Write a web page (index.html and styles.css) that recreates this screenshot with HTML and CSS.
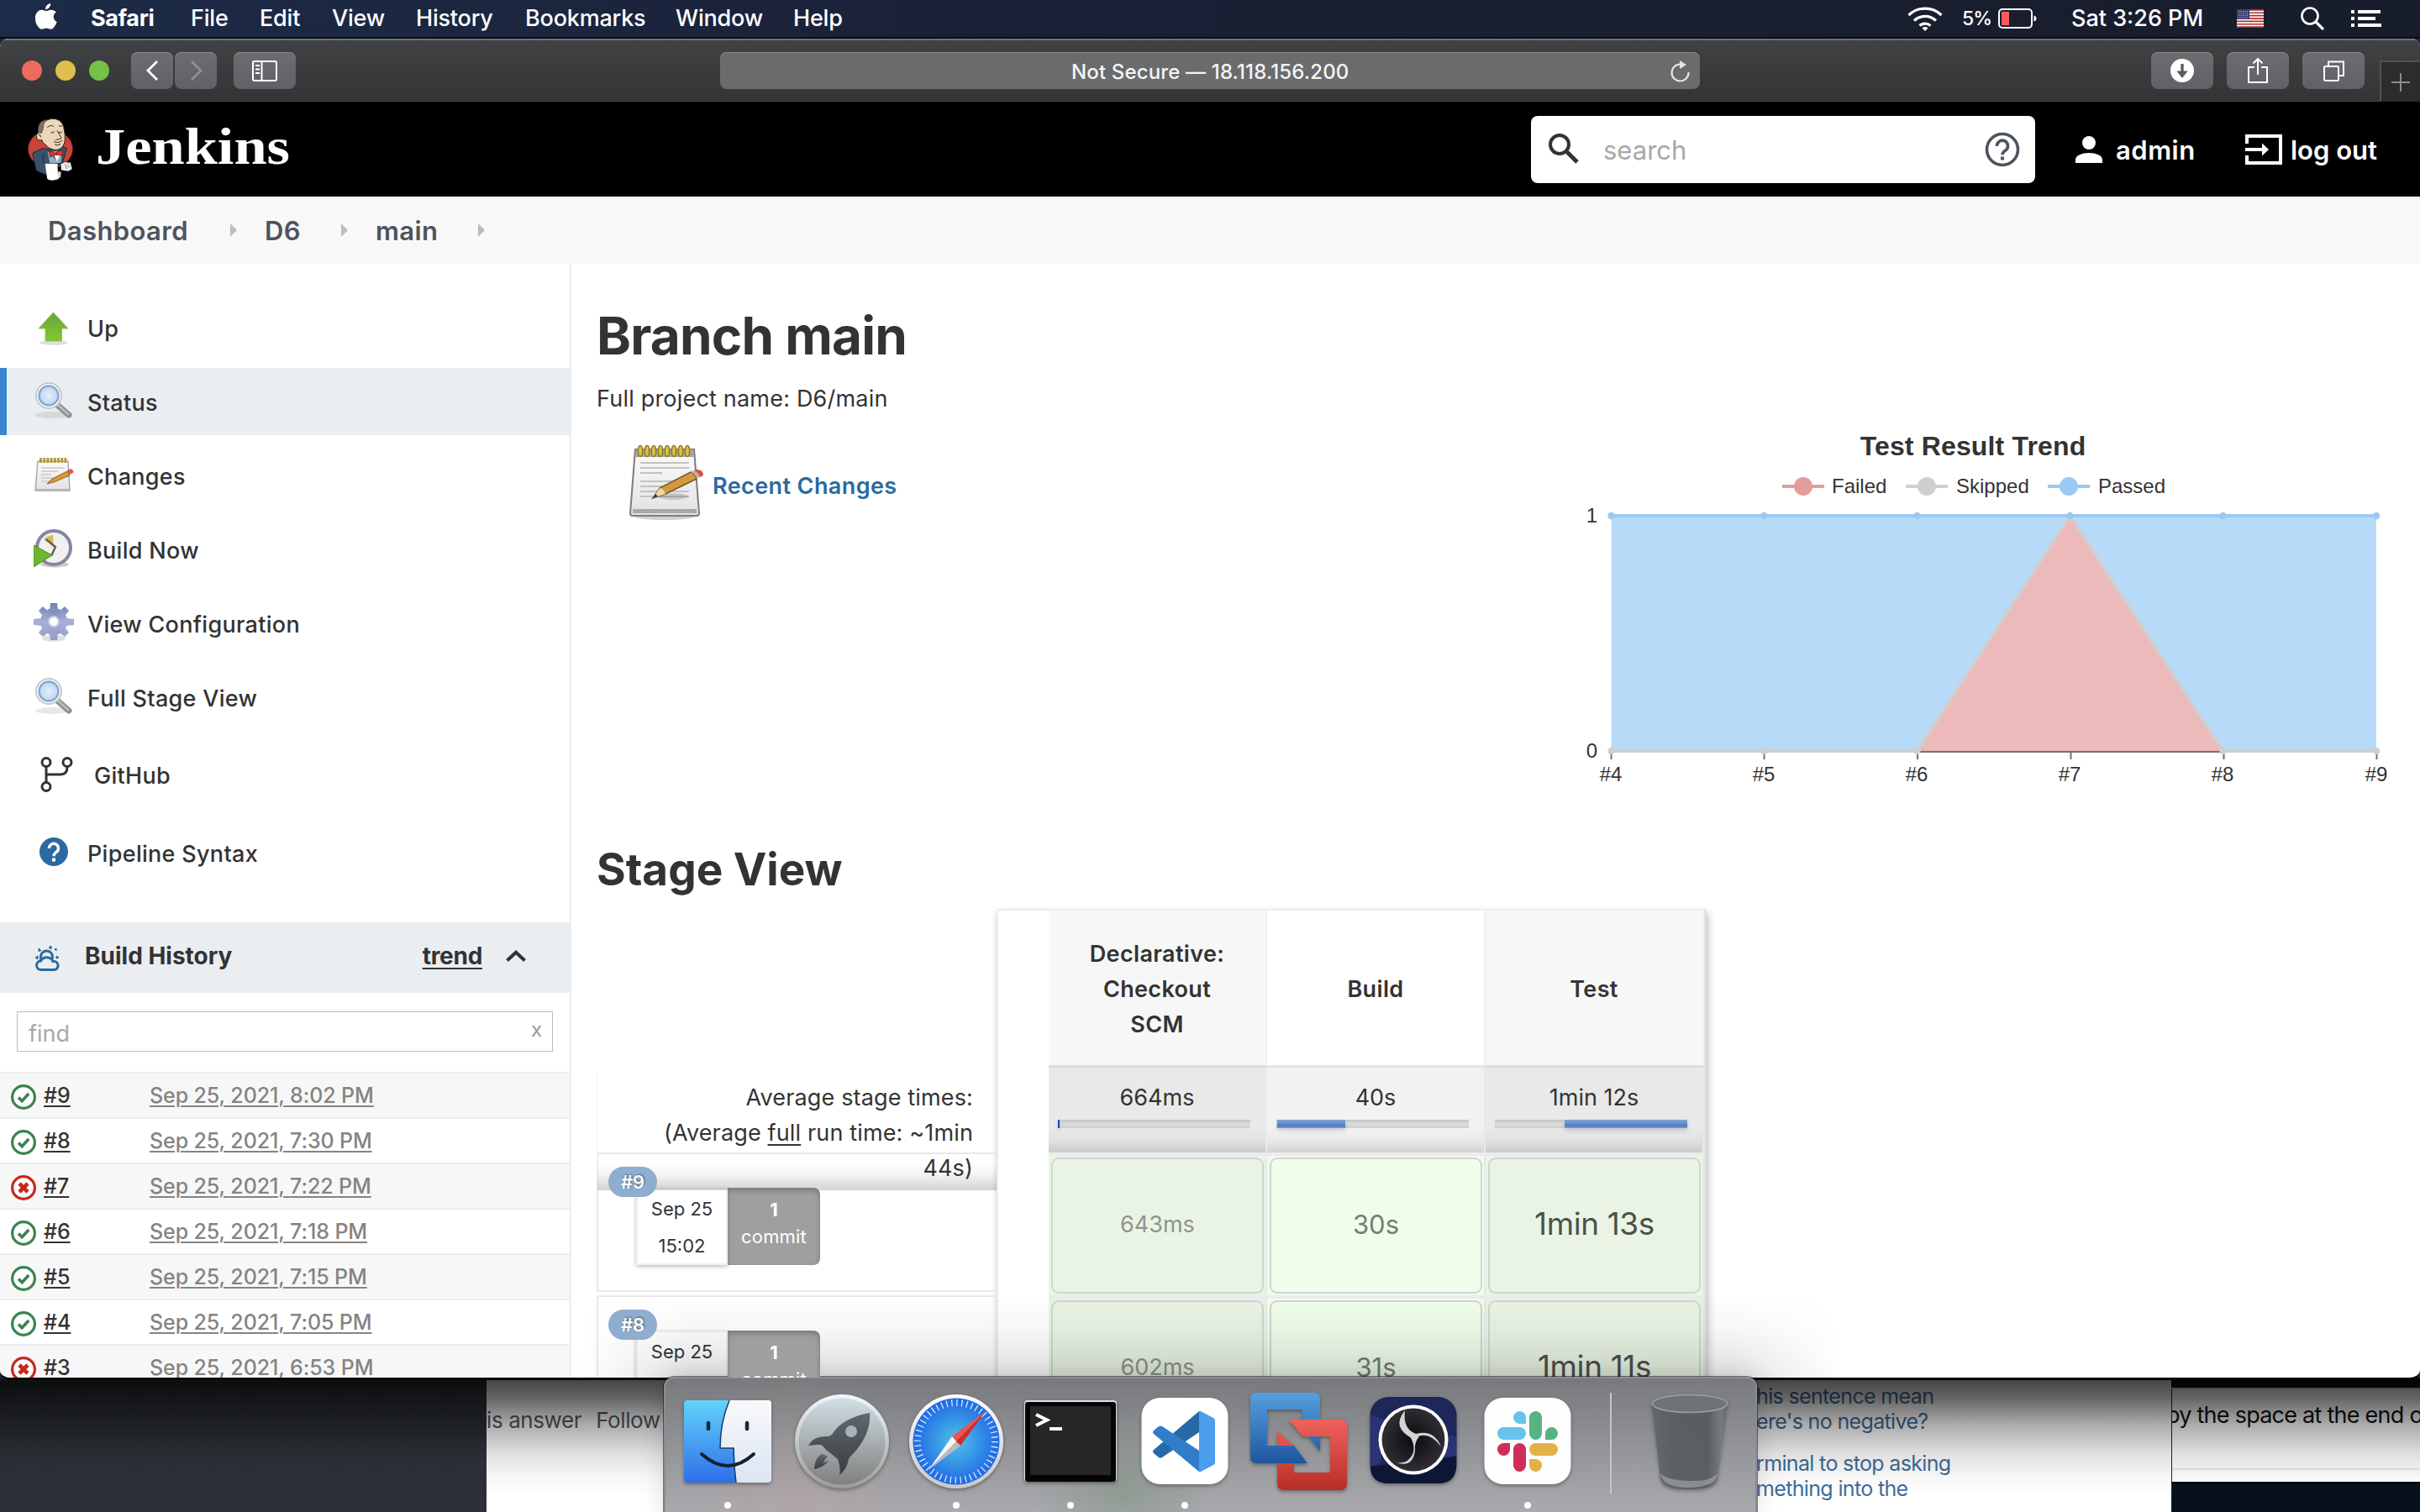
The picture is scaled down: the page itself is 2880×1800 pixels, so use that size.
FILE: index.html
```html
<!DOCTYPE html>
<html lang="en">
<head>
<meta charset="utf-8">
<title>main [D6] [Jenkins]</title>
<link rel="stylesheet" href="styles.css">
</head>
<body>
<svg class="defs" width="0" height="0">
  <defs>
    <linearGradient id="gGreen" x1="0" y1="0" x2="0" y2="1"><stop offset="0" stop-color="#6fa03c"/><stop offset="1" stop-color="#7fca2e"/></linearGradient>
    <radialGradient id="gLens"><stop offset="0" stop-color="#e4effb"/><stop offset="1" stop-color="#bdd5f1"/></radialGradient>
    <linearGradient id="gGear" x1="0" y1="0" x2="0" y2="1"><stop offset="0" stop-color="#6d84ae"/><stop offset=".5" stop-color="#a9b0d6"/><stop offset="1" stop-color="#949dc8"/></linearGradient>
    <linearGradient id="gPaper" x1="0" y1="0" x2="0" y2="1"><stop offset="0" stop-color="#fbfbfb"/><stop offset="1" stop-color="#e2e2e2"/></linearGradient>
    <linearGradient id="gFinder" x1="0" y1="0" x2="0" y2="1"><stop offset="0" stop-color="#62d3fa"/><stop offset="1" stop-color="#2e6fe9"/></linearGradient>
    <linearGradient id="gFace" x1="0" y1="0" x2="0" y2="1"><stop offset="0" stop-color="#f9f9fb"/><stop offset="1" stop-color="#dbe5f2"/></linearGradient>
    <linearGradient id="gRocket" x1="0" y1="0" x2="0" y2="1"><stop offset="0" stop-color="#d2dfe5"/><stop offset="1" stop-color="#7f7f7e"/></linearGradient>
    <linearGradient id="gRing" x1="0" y1="0" x2="0" y2="1"><stop offset="0" stop-color="#eff8fb"/><stop offset="1" stop-color="#9a9a9a"/></linearGradient>
    <linearGradient id="gShip" x1="0" y1="0" x2="0" y2="1"><stop offset="0" stop-color="#5d686f"/><stop offset="1" stop-color="#3a3d40"/></linearGradient>
    <radialGradient id="gSafari"><stop offset="0" stop-color="#4fc3e8"/><stop offset="1" stop-color="#1f68e4"/></radialGradient>
    <linearGradient id="gSafariRing" x1="0" y1="0" x2="0" y2="1"><stop offset="0" stop-color="#ffffff"/><stop offset="1" stop-color="#c9c9c9"/></linearGradient>
    <linearGradient id="gVmBlue" x1="0" y1="0" x2="0" y2="1"><stop offset="0" stop-color="#559fe0"/><stop offset="1" stop-color="#1f569f"/></linearGradient>
    <linearGradient id="gVmRed" x1="0" y1="0" x2="0" y2="1"><stop offset="0" stop-color="#f0625c"/><stop offset="1" stop-color="#b82e25"/></linearGradient>
    <radialGradient id="gObs"><stop offset="0" stop-color="#0c0a0d"/><stop offset="1" stop-color="#302e33"/></radialGradient>
    <linearGradient id="gTrash" x1="0" y1="0" x2="1" y2="0"><stop offset="0" stop-color="#65686b"/><stop offset=".3" stop-color="#5b5f63"/><stop offset=".75" stop-color="#5a5d61"/><stop offset=".92" stop-color="#7b7e81"/><stop offset="1" stop-color="#66696c"/></linearGradient>
    <symbol id="magnifier" viewBox="0 0 48 48">
      <ellipse cx="22" cy="40" rx="20" ry="4" fill="#000" opacity=".09"/>
      <path d="M27 27l15 13" stroke="#8d8f90" stroke-width="7" stroke-linecap="round"/>
      <path d="M29 28l12 11" stroke="#b9bbbc" stroke-width="3" stroke-linecap="round"/>
      <circle cx="18" cy="17" r="15" fill="#fff" stroke="#c6c8ca" stroke-width="2"/>
      <circle cx="18" cy="17" r="11.5" fill="url(#gLens)" stroke="#86a9d8" stroke-width="2.4"/>
    </symbol>
    <symbol id="ok" viewBox="0 0 32 32">
      <circle cx="16" cy="16" r="13.4" fill="#fff" stroke="#3b8350" stroke-width="3.2"/>
      <path d="M10 16.5l4.2 4.2 8-8.6" fill="none" stroke="#3b8350" stroke-width="3.6"/>
    </symbol>
    <symbol id="fail" viewBox="0 0 32 32">
      <circle cx="16" cy="16" r="13.4" fill="#fff" stroke="#c4281f" stroke-width="3.2"/>
      <path d="M11 11l10 10M21 11l-10 10" fill="none" stroke="#c4281f" stroke-width="4.6"/>
    </symbol>
  </defs>
</svg>

<div class="desktop">
  <!-- menu bar -->
  <header class="menubar">
    <svg class="apple" viewBox="0 0 26 31"><path fill="#fff" d="M18.2 0c.2 2-.6 3.800-1.700 5.100-1.200 1.400-2.800 2.300-4.400 2.200-.2-1.900.6-3.800 1.700-5C15 1 16.800.1 18.200 0zM24.900 10.600c-2.100 1.300-3.200 3.100-3.200 5.400 0 2.700 1.500 4.900 4 5.900-.5 1.700-1.300 3.300-2.300 4.800-1.400 2-2.800 4.100-5 4.100-2.200 0-2.800-1.300-5.300-1.300s-3.300 1.300-5.300 1.300c-2.200.1-3.800-2.100-5.200-4.100C-.4 22.500-1.300 15.200 1.700 11.200 3.100 9.100 5.400 7.800 7.600 7.800c2.200 0 3.600 1.300 5.500 1.300 1.800 0 2.900-1.300 5.500-1.300 2.200 0 4.600 1 6.300 2.800z"/></svg>
    <nav class="menus">
      <b class="m1">Safari</b><span class="m2">File</span><span class="m3">Edit</span><span class="m4">View</span><span class="m5">History</span><span class="m6">Bookmarks</span><span class="m7">Window</span><span class="m8">Help</span>
    </nav>
    <div class="status">
      <svg class="wifi" viewBox="0 0 42 30" fill="none" stroke="#fff" stroke-width="3.2"><path d="M1.500 11a28 28 0 0 1 39 0M8 17.500a19 19 0 0 1 26 0M14.500 23.500a10 10 0 0 1 13 0"/><path d="M17.500 26.500a5 5 0 0 1 7 0L21 30z" fill="#fff" stroke="none"/></svg>
      <span class="pct">5%</span>
      <svg class="battery" viewBox="0 0 46 24"><rect x="1" y="1" width="39" height="22" rx="4" fill="none" stroke="#fff" stroke-width="2"/><rect x="4" y="4" width="9" height="16" fill="#fb5a57"/><path d="M42.500 8.500q3 1 3 3.500t-3 3.500z" fill="#fff"/></svg>
      <span class="clock">Sat 3:26 PM</span>
      <svg class="flag" viewBox="0 0 32 22"><path fill="#fff" d="M0 0h32v22H0z"/><path fill="#a8302d" d="M0 0h32v1.700H0zM0 3.400h32v1.700H0zM0 6.800h32v1.700H0zM0 10.200h32v1.700H0zM0 13.500h32v1.700H0zM0 16.900h32v1.700H0zM0 20.300h32V22H0z"/><path fill="#3d3e6e" d="M0 0h15v12H0z"/><path d="M2 2.500h12M2 5h12M2 7.500h12M2 10h12" stroke="#b9bad0" stroke-width="1" stroke-dasharray="1 1.500"/></svg>
      <svg class="spot" viewBox="0 0 28 28" fill="none" stroke="#fff"><circle cx="11" cy="11" r="9.500" stroke-width="2.600"/><path d="M18 18l9 9" stroke-width="3.200"/></svg>
      <svg class="list" viewBox="0 0 36 20" fill="#fff"><path d="M0 0h4v4H0zM8 0h27v4H8zM0 8h4v4H0zM8 8h21v4H8zM0 16h4v4H0zM8 16h28v4H8z"/></svg>
    </div>
  </header>

  <!-- windows behind the browser -->
  <section class="back back-a"><span>is answer</span><span>Follow</span></section>
  <section class="back back-b"><p>his sentence mean<br>ere's no negative?</p><p>rminal to stop asking<br>mething into the</p></section>
  <section class="back back-c"><p>by the space at the end of</p><div class="navy"></div></section>
  <div class="drop"></div>

  <!-- browser window -->
  <main class="browser">
    <div class="toolbar">
      <i class="light red"></i><i class="light yellow"></i><i class="light green"></i>
      <span class="btn back-btn"><svg viewBox="0 0 50 44" fill="none" stroke="#fff" stroke-width="2.800"><path d="M31 11L20 22l11 11"/></svg></span>
      <span class="btn fwd-btn"><svg viewBox="0 0 50 44" fill="none" stroke="#929394" stroke-width="2.600"><path d="M20 11l11 11-11 11"/></svg></span>
      <span class="btn side-btn"><svg viewBox="0 0 74 44" fill="none" stroke="#fff" stroke-width="2"><rect x="23" y="11" width="28" height="23" rx="2"/><path d="M33.500 11v23M26 16h5M26 20.500h5M26 25h5"/></svg></span>
      <div class="address"><span>Not Secure — 18.118.156.200</span>
        <svg class="reload" viewBox="0 0 24 26" fill="none" stroke="#e4e4e4" stroke-width="2.200"><path d="M21.500 14a10 10 0 1 1-10-9.500"/><path d="M11 0l8 5-8 5z" fill="#e4e4e4" stroke="none"/></svg></div>
      <span class="btn dl-btn"><svg viewBox="0 0 74 44"><circle cx="37" cy="22" r="14" fill="#fff"/><path d="M35.300 14h3.400v8.500h5L37 31l-6.700-8.500h5z" fill="#5b5c5e"/></svg></span>
      <span class="btn"><svg viewBox="0 0 74 44" fill="none" stroke="#fff" stroke-width="2"><path d="M33 18h-7v18h22V18h-7M37 27V8M31.500 13.500L37 8l5.500 5.500"/></svg></span>
      <span class="btn"><svg viewBox="0 0 74 44" fill="none" stroke="#fff" stroke-width="2"><rect x="26" y="17" width="17" height="17" rx="1.500"/><path d="M31 17v-5.500h18V28h-6"/></svg></span>
      <span class="newtab"><svg viewBox="0 0 24 24" stroke="#8c8c8d" stroke-width="2"><path d="M12 1v22M1 12h22"/></svg></span>
    </div>

    <div class="jhead">
      <svg class="butler" viewBox="30 24 180 240">
        <ellipse cx="120" cy="142" rx="80" ry="68" fill="#cb4238" stroke="#2a1a1a" stroke-width="2"/>
        <path d="M70 150L56 158l14 62 34 14 8-30 50-8 16-56-16-8-40 12-30-4z" fill="#37536b" stroke="#1b2730" stroke-width="3"/>
        <path d="M110 152l8 2 27 36 14-38 5-2-8 42h-38z" fill="#8fb3c9"/>
        <path d="M128 152l16 38 16-40z" fill="#f7f4f0"/>
        <path d="M90 110q-14 4-19-6-4-14 6-22 4-40 46-48 34-2 44 28 6 26 5 46-2 34-32 38-26-2-40-22-10-4-10-14z" fill="#ecd6b8" stroke="#2c2422" stroke-width="3"/>
        <path d="M76 86q-4-30 12-42 10-6 20-8-16 14-14 32l-6 18q-6-6-12 0z" fill="#77726f" stroke="#2c2422" stroke-width="2"/>
        <path d="M77 90q8 0 9 10M109 66q8-12 22-5M150 60q8-2 12 2M122 82q8 6 12-2M148 82q8 6 14-2M144 76l14 24q2 6-8 8-10-1-12 3M132 116q14 8 30-5M136 127q10 5 20-3" fill="none" stroke="#2f2521" stroke-width="3"/>
        <path d="M114 148l22 8 26-10 1 22-20-7-24 10z" fill="#e0352c" stroke="#5e1310" stroke-width="2"/>
        <path d="M138 155h9v10h-9z" fill="#b32620"/>
        <path d="M98 158q-10 30 2 36h56" fill="none" stroke="#1b2730" stroke-width="3"/>
        <path d="M156 196l14-8 22 2 6 24-14 8-26-4z" fill="#f4f4f4" stroke="#2b2b2b" stroke-width="2.500"/>
        <path d="M172 196l6 18M184 194l-2 8M190 206h-8" stroke="#444" stroke-width="2"/>
        <path d="M148 222l10 2-2 18-10 8z" fill="#dedede"/>
        <path d="M101 194h44l3 56-20 4q-18 0-20-8z" fill="#fff"/>
      </svg>
      <span class="brand">Jenkins</span>
      <div class="search">
        <svg class="s-glass" viewBox="0 0 36 36" fill="none" stroke="#333"><circle cx="13" cy="13" r="11" stroke-width="4"/><path d="M22 22l12 12" stroke-width="5"/></svg>
        <span>search</span>
        <svg class="s-help" viewBox="0 0 42 42" fill="none" stroke="#4d545d"><circle cx="21" cy="21" r="18.500" stroke-width="3.600"/><path d="M14.500 17a6.500 6.500 0 1 1 10 5.200c-2 1.500-3.400 2.200-3.400 5" stroke-width="3.600"/><path d="M21 29.500v4" stroke-width="4"/></svg>
      </div>
      <svg class="person" viewBox="0 0 32 32" fill="#fff"><circle cx="16" cy="8" r="8"/><path d="M0 32v-4c0-5 8-8 16-8s16 3 16 8v4z"/></svg>
      <b class="admin">admin</b>
      <svg class="exit" viewBox="0 0 44 36" fill="none" stroke="#fff" stroke-width="4"><path d="M2 11V2h40v32H2v-9M0 18h22"/><path d="M20 10.500l8 7.500-8 7.500z" fill="#fff" stroke="none"/></svg>
      <b class="logout">log out</b>
    </div>

    <nav class="crumbs">
      <b class="c1">Dashboard</b><i></i><b class="c2">D6</b><i></i><b class="c3">main</b><i></i>
    </nav>

    <div class="page">
      <aside class="side">
        <a class="task"><svg viewBox="0 0 48 48"><ellipse cx="24" cy="42" rx="17" ry="3" fill="#000" opacity=".12"/><path d="M23.500 6L41 25h-7.500v15H14V25H6z" fill="url(#gGreen)" stroke="#8fc163" stroke-width="1"/></svg><span>Up</span></a>
        <a class="task on"><svg><use href="#magnifier"/></svg><span>Status</span></a>
        <a class="task"><svg viewBox="0 0 48 48"><path d="M5 7h36l2 35H2z" fill="url(#gPaper)" stroke="#a8a8a8" stroke-width="1.500"/><path d="M2 40h41l.5 3H2z" fill="#b5b5b5"/><path d="M7 6h33" stroke="#b69a3d" stroke-width="6" stroke-dasharray="3 1.200"/><path d="M9 15h28M9 19h20M9 23h12M9 27h24M9 31h18" stroke="#c9c9c9" stroke-width="1.500"/><path d="M16 34l6-6 18-9 3 5-19 8z" fill="#d9983b" stroke="#8f6023" stroke-width="1"/><path d="M40 18l5-2 3 4-5 3z" fill="#df5648"/></svg><span>Changes</span></a>
        <a class="task"><svg viewBox="0 0 48 48"><ellipse cx="25" cy="42" rx="17" ry="3.500" fill="#000" opacity=".2"/><circle cx="24" cy="22" r="20" fill="#f0f0ec" stroke="#8584a6" stroke-width="4"/><path d="M24 22L12 12a16 16 0 0 1 11-5z" fill="#dcb94f"/><path d="M15 12l11 9-5 11" fill="none" stroke="#555" stroke-width="2.200"/><path d="M0 19l22 12L0 45z" fill="#6fb52f" stroke="#4b8a1f" stroke-width="1"/></svg><span>Build Now</span></a>
        <a class="task"><svg viewBox="0 0 48 48"><ellipse cx="24" cy="42" rx="14" ry="4" fill="#000" opacity=".12"/><g fill="url(#gGear)"><circle cx="24" cy="22" r="16"/><path d="M20 0h8l1 9h-10zM20 44h8l1-9h-10zM0 19v7l10 1v-9zM48 19v7l-10 1v-9zM6 9l5-5 8 7-6 7zM42 9l-5-5-8 7 6 7zM6 35l5 5 8-6-6-8zM42 35l-5 5-8-6 6-8z"/></g><circle cx="24" cy="22" r="6" fill="#fff" stroke="#c5c9e2" stroke-width="2"/></svg><span>View Configuration</span></a>
        <a class="task"><svg><use href="#magnifier"/></svg><span>Full Stage View</span></a>
        <a class="task github"><svg viewBox="0 0 48 48" fill="none" stroke="#333" stroke-width="3"><circle cx="8" cy="8.500" r="5"/><circle cx="33" cy="8.500" r="5"/><circle cx="8" cy="37.500" r="5"/><path d="M8 14v18M8 23h17q8 0 8-9"/></svg><span>GitHub</span></a>
        <a class="task"><svg viewBox="0 0 48 48"><circle cx="24" cy="23" r="17" fill="#2a6aa0"/><path d="M18.500 19a5.500 5.500 0 1 1 8.500 4.400c-1.900 1.300-3 2-3 4.800" fill="none" stroke="#fff" stroke-width="3.400"/><path d="M24 30.500v4" stroke="#fff" stroke-width="4"/></svg><span>Pipeline Syntax</span></a>

        <div class="bh">
          <svg class="sun" viewBox="0 0 32 32" fill="none" stroke="#2a6aa0" stroke-width="3"><path d="M8 18a7.500 7.500 0 0 1-.5-4A7 7 0 0 1 21.500 14q0 1.500-.5 2.500"/><path d="M8 29.500a5.200 5.200 0 0 1-.5-10.400A8 8 0 0 1 22 19.500a5 5 0 0 1 2 10z"/><path d="M5 4l3 2.500-3 1zM17 3l3-2v4zM1 15l3-2v4zM26 13l3 2-3 1zM24 5l2-1v3z" fill="#2a6aa0" stroke-width="1"/></svg>
          <b>Build History</b><b class="trend">trend</b>
          <svg class="chev" viewBox="0 0 24 14" fill="none" stroke="#333" stroke-width="4"><path d="M1.500 12.500L12 2.800l10.500 9.700"/></svg>
        </div>
        <div class="find"><div class="findbox"><span>find</span><em>x</em></div></div>
        <div class="builds">
          <div><svg><use href="#ok"/></svg><u>#9</u><u class="dt">Sep 25, 2021, 8:02 PM</u></div>
          <div><svg><use href="#ok"/></svg><u>#8</u><u class="dt">Sep 25, 2021, 7:30 PM</u></div>
          <div><svg><use href="#fail"/></svg><u>#7</u><u class="dt">Sep 25, 2021, 7:22 PM</u></div>
          <div><svg><use href="#ok"/></svg><u>#6</u><u class="dt">Sep 25, 2021, 7:18 PM</u></div>
          <div><svg><use href="#ok"/></svg><u>#5</u><u class="dt">Sep 25, 2021, 7:15 PM</u></div>
          <div><svg><use href="#ok"/></svg><u>#4</u><u class="dt">Sep 25, 2021, 7:05 PM</u></div>
          <div><svg><use href="#fail"/></svg><u>#3</u><u class="dt">Sep 25, 2021, 6:53 PM</u></div>
        </div>
      </aside>

      <section class="content">
        <h1>Branch main</h1>
        <p class="full">Full project name: D6/main</p>
        <div class="upper">
          <div class="recent">
            <svg viewBox="0 0 90 90">
              <ellipse cx="42" cy="86" rx="36" ry="4" fill="#000" opacity=".18"/>
              <path d="M7 6h70l6 76q0 3-3 3H4q-3 0-3-3z" fill="url(#gPaper)" stroke="#7c7c7c" stroke-width="2"/>
              <path d="M8 6h68l1 9H7z" fill="#a7a597"/>
              <g fill="#d8c445" stroke="#8c7a20" stroke-width="1.500"><ellipse cx="13" cy="8" rx="2.600" ry="6.500"/><ellipse cx="21" cy="8" rx="2.600" ry="6.500"/><ellipse cx="29" cy="8" rx="2.600" ry="6.500"/><ellipse cx="37" cy="8" rx="2.600" ry="6.500"/><ellipse cx="45" cy="8" rx="2.600" ry="6.500"/><ellipse cx="53" cy="8" rx="2.600" ry="6.500"/><ellipse cx="61" cy="8" rx="2.600" ry="6.500"/><ellipse cx="69" cy="8" rx="2.600" ry="6.500"/></g>
              <path d="M13 22h58M13 28h58M13 34h26M13 44h58M13 50h50M13 56h58M13 62h58" stroke="#c2c2c2" stroke-width="2.200"/>
              <path d="M4 77h76v5H4z" fill="#a9a9a9"/>
              <ellipse cx="52" cy="62" rx="18" ry="4" fill="#000" opacity=".15"/>
              <path d="M28 64l8-12 37-19q5 1 7 8L43 59z" fill="#d29a40" stroke="#7b5420" stroke-width="1.500"/>
              <path d="M28 64l8-12q5 1 7 7z" fill="#ead9a6"/><path d="M28 64l3-5 3 3z" fill="#3b3420"/>
              <path d="M73 33l4-2q6 1 7 8l-4 2q-2-7-7-8z" fill="#b6b3b3"/><path d="M77 31l3-1q8 0 8 7l-4 2q-2-6-7-8z" fill="#e04a3c"/>
            </svg>
            <b>Recent Changes</b>
          </div>
          <svg class="chart" viewBox="1880 500 1000 440">
            <text class="ct" x="2348" y="542" text-anchor="middle">Test Result Trend</text>
            <g stroke-width="4"><path d="M2121 579h50" stroke="#e39c9c"/><path d="M2268 579h50" stroke="#cfcfcf"/><path d="M2437 579h50" stroke="#9bc9f4"/></g>
            <circle cx="2146" cy="579" r="11" fill="#e39c9c"/><circle cx="2293" cy="579" r="11" fill="#cfcfcf"/><circle cx="2462" cy="579" r="11" fill="#9bc9f4"/>
            <g class="cl"><text x="2180" y="587">Failed</text><text x="2328" y="587">Skipped</text><text x="2497" y="587">Passed</text></g>
            <path d="M1917.500 614H2828v280h-182.500L2463.500 614 2281.500 894h-364z" fill="#b8daf9"/>
            <path d="M2281.500 894l182-280 182 280z" fill="#ecbaba"/>
            <path d="M1917.500 895H2828M1917.500 895v9M2099.500 895v9M2282 895v9M2464.500 895v9M2646.500 895v9M2828.500 895v9" stroke="#6e7079" stroke-width="2"/>
            <path d="M1917.500 894h364l182-280 182 280H2828" fill="none" stroke="#d0cfcf" stroke-width="4" stroke-linejoin="bevel"/>
            <path d="M1917.500 614H2828" stroke="#9bc9f4" stroke-width="4"/>
            <g fill="#d0cfcf"><circle cx="1917.500" cy="894" r="4.200"/><circle cx="2099.500" cy="894" r="4.200"/><circle cx="2281.500" cy="894" r="4.200"/><circle cx="2645.500" cy="894" r="4.200"/><circle cx="2828" cy="894" r="4.200"/></g>
            <g fill="#9bc9f4"><circle cx="1917.500" cy="614" r="4.200"/><circle cx="2099.500" cy="614" r="4.200"/><circle cx="2281.500" cy="614" r="4.200"/><circle cx="2463.500" cy="614" r="4.200"/><circle cx="2645.500" cy="614" r="4.200"/><circle cx="2828" cy="614" r="4.200"/></g>
            <g class="cl" text-anchor="end"><text x="1901" y="622">1</text><text x="1901" y="902">0</text></g>
            <g class="cl" text-anchor="middle"><text x="1917" y="930">#4</text><text x="2099" y="930">#5</text><text x="2281" y="930">#6</text><text x="2463" y="930">#7</text><text x="2645" y="930">#8</text><text x="2828" y="930">#9</text></g>
          </svg>
        </div>
        <h2>Stage View</h2>
        <div class="stage">
          <div class="runs">
            <div class="avg">Average stage times:<br>(Average <u>full</u> run time: ~1min<br>44s)</div>
            <div class="run"><span class="badge">#9</span><div class="when"><span>Sep 25</span><span>15:02</span></div><div class="commit"><b>1</b><span>commit</span></div></div>
            <div class="run"><span class="badge">#8</span><div class="when"><span>Sep 25</span><span>14:30</span></div><div class="commit"><b>1</b><span>commit</span></div></div>
          </div>
          <div class="table">
            <div class="th odd">Declarative:<br>Checkout<br>SCM</div><div class="th">Build</div><div class="th odd">Test</div>
            <div class="av odd"><span>664ms</span><div class="bar"><i class="tiny" style="margin-left:0;width:2px"></i></div></div>
            <div class="av"><span>40s</span><div class="bar"><i style="margin-left:1px;width:81px"></i></div></div>
            <div class="av odd"><span>1min 12s</span><div class="bar"><i style="margin-left:83px;width:146px"></i></div></div>
            <div class="cell odd"><span class="t1">643ms</span></div><div class="cell"><span class="t2">30s</span></div><div class="cell odd"><span class="t3">1min 13s</span></div>
            <div class="cell odd"><span class="t1">602ms</span></div><div class="cell"><span class="t2">31s</span></div><div class="cell odd"><span class="t3">1min 11s</span></div>
          </div>
        </div>
      </section>
    </div>
    <div class="dockshade"></div>
  </main>

  <!-- dock -->
  <footer class="dock">
    <div class="app run-on"><svg viewBox="0 0 116 116">
      <rect x="6" y="9" width="104" height="98" rx="4" fill="url(#gFinder)"/>
      <path d="M60 9h46q4 0 4 4v90q0 4-4 4H68q-2-21-2-41H49q0-30 11-57z" fill="url(#gFace)"/>
      <path d="M60 9q-11 27-11 57h16q0 20 3 41" fill="none" stroke="#1c3c6b" stroke-width="1.500"/>
      <path d="M35 36v7M81 36v7" stroke="#1d2530" stroke-width="4.500" stroke-linecap="round"/>
      <path d="M27 73q31 28 62 0" fill="none" stroke="#152033" stroke-width="4" stroke-linecap="round"/></svg></div>
    <div class="app"><svg viewBox="0 0 116 116">
      <circle cx="58" cy="58" r="56" fill="url(#gRing)"/><circle cx="58" cy="58" r="51.500" fill="url(#gRocket)"/>
      <path d="M91 24q2 25-20 49-4 3-5 6-2 12-11 19 2-7-2-19l-15-12q-3-6-10-5l-10 1q6-12 24-11l4-2q12-20 45-26z" fill="url(#gShip)"/>
      <circle cx="69" cy="46" r="7" fill="#a7b2b6"/>
      <path d="M35 73q-9 3-10 18 11-2 17-10-5 1-6 4 1-6 5-9z" fill="url(#gShip)"/></svg></div>
    <div class="app run-on"><svg viewBox="0 0 116 116">
      <circle cx="58" cy="58" r="56" fill="url(#gSafariRing)"/><circle cx="58" cy="58" r="51.500" fill="url(#gSafari)"/>
      <circle cx="58" cy="58" r="46" fill="none" stroke="#d8ecff" stroke-width="8" stroke-dasharray="1.300 4.718"/>
      <path d="M92 23L53 52l5 5z" fill="#f05c56"/><path d="M92 23L63 63l-5-5-5-6z" fill="#e8564f"/><path d="M92 23L63 63l-5-5z" fill="#c3322c"/>
      <path d="M25 92l28-40 5 6z" fill="#f6f6f6"/><path d="M25 92l38-29-5-5z" fill="#bcbcbc"/></svg></div>
    <div class="app run-on"><svg viewBox="0 0 116 116">
      <rect x="3" y="9" width="110" height="97" rx="4" fill="#dde3e6"/><rect x="4" y="11" width="108" height="95" rx="3" fill="#050505"/><rect x="10" y="16" width="96" height="82" fill="#262626"/>
      <path d="M17 26l13 6.500L17 39" fill="none" stroke="#fff" stroke-width="4"/><path d="M33 43h15" stroke="#fff" stroke-width="4"/></svg></div>
    <div class="app run-on"><svg viewBox="0 0 116 116">
      <rect x="6.500" y="6" width="103" height="103" rx="22" fill="#fff"/>
      <path d="M75 22v25L31 77q-2 1-4 0l-6-5q-2-2 0-4z" fill="#2569a8"/>
      <path d="M75 94V69L31 40q-2-1-4 0l-6 5q-2 2 0 4z" fill="#2f7dcb"/>
      <path d="M75 22q1 0 2 0l15 8q2 1 2 3v50q0 2-2 3l-15 8q-1 0-2 0z" fill="#4a9eec"/></svg></div>
    <div class="app"><svg viewBox="0 0 116 116">
      <path fill="url(#gVmBlue)" fill-rule="evenodd" d="M8 0h67q8 0 8 8v62L62 42V20H20v43h32l16 21H8q-8 0-8-8V8q0-8 8-8z"/>
      <path fill="url(#gVmRed)" fill-rule="evenodd" d="M46 32h61q8 0 8 8v68q0 8-8 8H40q-8 0-8-8V84h20v11h43V52H62z"/>
      <path fill="#e2524c" d="M32 46l20 17H32z"/></svg></div>
    <div class="app"><svg viewBox="0 0 116 116">
      <rect x="6.500" y="5" width="103" height="103" rx="22" fill="#1d2759"/><path d="M7 88l102-13v12q0 21-22 21H29q-22 0-22-20z" fill="#0d1635"/><path d="M7 26l20 8-8 50-12 4zM95 48l14 5v22l-14 3z" fill="#2b3375"/>
      <circle cx="58" cy="56" r="41.500" fill="#fff"/><circle cx="58" cy="56" r="37.500" fill="url(#gObs)"/>
      <path d="M48 21q-17 21 10 34 17-12 33 9-9-21-30-15-16-6-13-28z" fill="#d4d4d4"/><path d="M54 52q10 17-2 28-4 4-14 3 19 7 22-14-1-10 5-17z" fill="#d4d4d4"/></svg></div>
    <div class="app run-on"><svg viewBox="0 0 116 116">
      <rect x="6.500" y="6" width="103" height="103" rx="22" fill="#fdfdfd"/>
      <g fill="#65c5ee"><path d="M56 37h-7.500a7.500 7.500 0 1 1 7.500-7.500z"/><rect x="22" y="41" width="34" height="15" rx="7.500"/></g>
      <g fill="#57b382"><rect x="60" y="22" width="15" height="34" rx="7.500"/><path d="M79 56v-7.500a7.500 7.500 0 1 1 7.500 7.500z"/></g>
      <g fill="#cd2f58"><path d="M37 60v7.500a7.500 7.500 0 1 1-7.500-7.500z"/><rect x="41" y="60" width="15" height="34" rx="7.500"/></g>
      <g fill="#e4b148"><rect x="60" y="60" width="34" height="15" rx="7.500"/><path d="M60 79h7.500a7.500 7.500 0 1 1-7.500 7.500z"/></g></svg></div>
    <i class="divider"></i>
    <div class="app"><svg viewBox="0 0 116 116">
      <path d="M12 14l10 88q2 13 34 13t34-13l11-88z" fill="url(#gTrash)" opacity=".9"/>
      <path d="M22 96q2 17 34 17t34-17q-8 10-34 9T22 96z" fill="#a9abac" opacity=".6"/>
      <ellipse cx="57" cy="13" rx="44.500" ry="10.500" fill="#707376" stroke="#a0a3a5" stroke-width="1.500"/></svg></div>
  </footer>
</div>
</body>
</html>
```
FILE: styles.css
```css
* { box-sizing: border-box; }
html, body { margin: 0; }
body { font-family: Inter, "Liberation Sans", sans-serif; color: #333; overflow: hidden; }
h1, h2, p { margin: 0; }
svg { display: block; flex: none; }
.defs { position: absolute; }

.desktop {
  position: relative; width: 2880px; height: 1800px; overflow: hidden;
  background: linear-gradient(180deg, #1b2438 0, #1b2438 1640px, #0d0e10 1644px, #2b2f35 1740px, #2d3137 1800px);
}

/* menu bar */
.menubar {
  display: flex; align-items: center; height: 46px; padding: 0 46px 0 42px; color: #fff;
  background: linear-gradient(90deg, #1d2b48, #1a2035 45%, #181d2b);
  border-bottom: 2px solid #090d16; font-size: 27px; line-height: 44px; font-weight: 500;
}
.apple { width: 26px; height: 31px; margin: -6px 40px 0 0; }
.menus { display: flex; letter-spacing: -.2px; }
.menus > * { white-space: nowrap; }
.m1 { width: 119px; font-weight: 700; letter-spacing: -.4px; } .m2 { width: 82px; } .m3 { width: 86px; } .m4 { width: 100px; }
.m5 { width: 130px; } .m6 { width: 179px; } .m7 { width: 140px; }
.status { display: flex; align-items: center; margin-left: auto; }
.wifi { width: 42px; height: 30px; margin-right: 23px; }
.pct { font-size: 23px; letter-spacing: -.9px; width: 43px; }
.battery { width: 46px; height: 24px; margin-right: 41px; }
.clock { width: 197px; letter-spacing: 0; white-space: nowrap; }
.flag { width: 32px; height: 22px; margin-right: 44px; }
.spot { width: 28px; height: 28px; margin-right: 32px; }
.list { width: 36px; height: 20px; }

/* windows behind */
.back { position: absolute; background: #fff; overflow: hidden; white-space: nowrap; }
.back-a { left: 579px; top: 1630px; width: 1511px; height: 170px; padding-top: 44px; display: flex; gap: 17px; font-size: 26px; line-height: 34px; letter-spacing: -.4px; color: #565b61; }
.back-b { left: 2088px; top: 1630px; width: 496px; height: 170px; padding: 17px 0 0 2px; font-size: 25px; line-height: 30px; letter-spacing: -.65px; color: #3f6d99; }
.back-b p + p { margin-top: 20px; }
.back-c { left: 2584px; top: 1652px; width: 296px; height: 148px; border-left: 1px solid #222; border-top: 2px solid #ddd; }
.back-c p { height: 96px; padding-top: 13px; font-size: 27px; line-height: 36px; color: #111; border-bottom: 2px solid #e8e8e8; margin-left: -7px; letter-spacing: -.75px; }
.navy { height: 50px; margin-top: 14px; background: #07111c; border-top: 2px solid #000; }
.drop {
  position: absolute; left: 579px; top: 1640px; width: 2301px; height: 140px;
  background: linear-gradient(180deg, rgba(0,0,0,.74), rgba(0,0,0,.6) 18%, rgba(0,0,0,.33) 40%, rgba(0,0,0,.12) 65%, rgba(0,0,0,.03) 85%, transparent);
}

/* browser */
.browser {
  position: absolute; left: 0; top: 46px; width: 2880px; height: 1597px; overflow: hidden;
  display: flex; flex-direction: column; background: #fff; border-radius: 10px 10px 12px 12px; border-bottom: 3px solid #060807;
}
.toolbar {
  display: flex; align-items: center; height: 75px; padding-left: 26px; flex: none;
  background: linear-gradient(180deg, #414244, #333436); border-top: 2px solid #707172; border-bottom: 1px solid #4a4b4c;
}
.light { width: 24px; height: 24px; border-radius: 50%; margin-right: 16px; flex: none; }
.red { background: #ee6a5e; } .yellow { background: #e0be4f; } .green { background: #74c048; margin-right: 26px; }
.btn { width: 74px; height: 44px; flex: none; border-radius: 8px; background: linear-gradient(180deg, #6c6d70, #606164); box-shadow: inset 0 1px 0 #88898b; margin-right: 16px; }
.btn svg { width: 100%; height: 100%; }
.back-btn { width: 50px; margin-right: 2px; } .fwd-btn { width: 50px; margin-right: 20px; } .side-btn { margin-right: 505px; }
.address {
  display: flex; align-items: center; width: 1166px; flex: none; height: 44px; border-radius: 8px; margin-right: 537px; padding: 2px 11px 0 418px;
  background: #6a6b6d; box-shadow: inset 0 1px 0 #88898b; color: #f4f4f4; font-size: 24px; font-weight: 500; letter-spacing: .15px; white-space: nowrap;
}
.reload { width: 24px; height: 26px; margin-left: auto; }
.newtab { width: 49px; height: 49px; flex: none; margin: 24px 0 0 2px; background: #2b2c2d; border-left: 2px solid #515253; border-top: 2px solid #515253; padding: 12px 0 0 11px; }
.newtab svg { width: 24px; height: 24px; }

.jhead { display: flex; align-items: center; height: 113px; flex: none; padding: 0 0 0 30px; background: #000; color: #fff; font-size: 31px; }
.butler { width: 60px; height: 80px; margin-right: 24px; }
.brand { font: bold 61px/80px "Liberation Serif", serif; width: 1708px; transform: scaleX(1.155); transform-origin: 0 50%; padding-bottom: 5px; }
.search { display: flex; align-items: center; width: 600px; height: 80px; border-radius: 8px; background: #fff; color: #a8a8a8; padding: 0 18px 0 21px; margin-right: 48px; }
.search span { padding-top: 2px; }
.s-glass { width: 36px; height: 36px; margin: -2px 29px 0 0; }
.s-help { width: 42px; height: 42px; margin-left: auto; }
.person { width: 32px; height: 32px; margin-right: 16px; }
.admin { width: 154px; font-weight: 600; letter-spacing: .5px; padding-top: 2px; }
.exit { width: 44px; height: 36px; margin-right: 10px; }
.logout { font-weight: 600; white-space: nowrap; letter-spacing: 0; padding-top: 2px; }

.crumbs { display: flex; align-items: center; height: 80px; flex: none; padding-left: 57px; background: #f8f8f8; color: #4d545d; font-size: 31px; }
.crumbs b { font-weight: 600; letter-spacing: .4px; } .c1 { width: 217px; } .c2 { width: 91px; } .c3 { width: 122px; }
.crumbs i { border-left: 8px solid #bcbcbc; border-top: 8px solid transparent; border-bottom: 8px solid transparent; margin-right: 33px; }

.page { display: flex; flex: 1; min-height: 0; }
.side { width: 680px; flex: none; border-right: 2px solid #eaeef1; padding-top: 36px; }
.task { display: flex; align-items: center; height: 80px; margin-bottom: 8px; padding-left: 40px; font-size: 27px; font-weight: 500; letter-spacing: .3px; }
.task span { padding-top: 2px; }
.task svg { width: 48px; height: 48px; margin: 0 16px 0 0; }
.task.on { background: #eaeef1; border-left: 8px solid #3b85cf; padding-left: 32px; }
.task.github { height: 89px; padding-left: 47px; }
.task.github svg { margin-right: 17px; }
.bh { display: flex; align-items: center; height: 84px; margin-top: 43px; padding: 0 52px 4px 41px; background: #eaeef1; font-size: 28px; }
.bh b { font-weight: 700; }
.sun { width: 32px; height: 32px; margin: 6px 28px 0 0; }
.trend { margin-left: auto; text-decoration: underline; text-underline-offset: 4px; margin-right: 28px; letter-spacing: -.3px; }
.chev { width: 24px; height: 14px; }
.find { height: 94px; padding: 22px 20px 0; }
.findbox { display: flex; justify-content: space-between; align-items: center; height: 48px; border: 1.5px solid #bcbcbc; padding: 0 12px 0 13px; font-size: 27px; color: #a8a8a8; }
.findbox span { padding-top: 4px; }
.findbox em { font-style: normal; font-size: 24px; color: #999; padding-bottom: 5px; }
.builds > div { display: flex; align-items: center; height: 54px; border-top: 2px solid #eaeef1; padding-left: 12px; font-size: 25px; font-weight: 500; }
.builds > div:nth-child(odd) { background: #f7f7f7; }
.builds svg { width: 32px; height: 32px; margin: 4px 8px 0 0; }
.builds u { width: 126px; text-decoration-thickness: 2px; text-underline-offset: 3px; }
.builds .dt { color: #848484; width: auto; letter-spacing: -.1px; white-space: nowrap; }

.content { flex: 1; padding: 48px 0 0 30px; min-width: 0; }
h1 { font-size: 62px; line-height: 76px; letter-spacing: -.8px; font-weight: 700; }
.full { margin-top: 17px; font-size: 27px; line-height: 40px; letter-spacing: .2px; }
.upper { display: flex; justify-content: space-between; height: 510px; }
.recent { display: flex; padding: 34px 0 0 39px; }
.recent svg { width: 90px; height: 90px; margin-right: 9px; }
.recent b { font-size: 27px; font-weight: 600; line-height: 40px; margin-top: 30px; color: #2a6aa0; letter-spacing: .4px; }
.chart { width: 1000px; height: 440px; margin-top: 5px; }
.chart text { font-family: "Liberation Sans", sans-serif; fill: #333; }
.ct { font-size: 32px; font-weight: 700; letter-spacing: .15px; } .cl { font-size: 24px; }
h2 { font-size: 53px; line-height: 64px; letter-spacing: 0; font-weight: 700; margin-top: -2px; }

.stage { display: flex; margin-top: 15px; font-size: 27px; }
.runs { width: 476px; padding-top: 193px; }
.avg {
  position: relative; height: 142px; margin-bottom: -45px; padding: 11px 28px 0 0; text-align: right; line-height: 42px; letter-spacing: .15px;
  border-left: 1px solid #f3f3f3; background: linear-gradient(180deg, transparent 108px, rgba(0,0,0,.04) 122px, rgba(0,0,0,.17)); z-index: 1;
}
.avg u { text-underline-offset: 4px; text-decoration-thickness: 2px; }
.run { position: relative; display: flex; height: 166px; margin-bottom: 4px; border: 2px solid #e8e8e8; border-right: 0; padding: 40px 0 0 45px; font-size: 23px; }
.badge {
  position: absolute; z-index: 2; left: 12px; top: 15px; width: 58px; height: 36px; border-radius: 18px; background: #8fadcf; color: #fff;
  font-weight: 600; font-size: 22px; line-height: 37px; text-align: center; text-shadow: 1px -1px 2px rgba(0,0,0,.45);
}
.when { width: 109px; height: 92px; background: #fff; border: 2px solid #eef0f2; box-shadow: 0 2px 5px rgba(0,0,0,.25); display: flex; flex-direction: column; align-items: center; line-height: 44px; font-size: 22px; padding-top: 1px; }
.commit { position: relative; z-index: 1; width: 110px; height: 92px; border-radius: 0 8px 8px 0; background: #9f9f9f; box-shadow: inset 0 3px 6px rgba(0,0,0,.25); color: #fff; display: flex; flex-direction: column; align-items: center; line-height: 32px; padding-top: 10px; font-size: 22px; }
.commit span { letter-spacing: .2px; }

.table {
  display: grid; grid-template-columns: 260px 260px 260px; grid-template-rows: 187px 101px 170px 170px; width: 844px; padding-left: 60px;
  border: 2px solid #eaeef1; border-right-color: #e3e3e3; background: #fff; box-shadow: 3px 5px 9px rgba(0,0,0,.24), -1px 3px 5px rgba(0,0,0,.08);
}
.th { display: flex; align-items: center; justify-content: center; text-align: center; line-height: 42px; font-weight: 600; letter-spacing: .35px; padding-top: 4px; border-bottom: 3px solid #e4e4e4; border-right: 2px solid #efefef; background: #fff; }
.th.odd { background: #f7f7f7; border-bottom-color: #dcdcdc; }
.av { --c: #f2f2f2; display: flex; flex-direction: column; align-items: center; line-height: 40px; padding-top: 16px; border-right: 2px solid #e9e9e9;
  background: linear-gradient(180deg, transparent 70%, rgba(0,0,0,.03) 85%, rgba(0,0,0,.13)), var(--c); }
.av.odd { --c: #e9e9e9; }
.bar { width: 229px; height: 10px; margin: 6px 8px 0 0; background: linear-gradient(180deg, #c4c4c4, #dcdcdc 50%, #cfcfcf); }
.bar i { display: block; height: 10px; background: linear-gradient(180deg, #86a8d0, #4f7cc8 75%, #7aa0d8); box-shadow: 0 3px 5px rgba(0,0,0,.15); }
.bar .tiny { background: #1246c4; }
.cell { padding: 2px 2px 3px 3px; background: #f0fdeb; border-top: 4px solid #ececec; border-right: 2px solid #e9e9e9; }
.cell.odd { background: #e9f4e4; }
.cell span { display: flex; align-items: center; justify-content: center; height: 162px; border: 2px solid #cfd5d5; border-radius: 9px; padding-bottom: 4px; }
.t1 { color: #8f968d; } .t2 { color: #767d74; font-size: 31px; } .cell .t3 { color: #4c514b; font-size: 37px; letter-spacing: -.4px; padding-bottom: 6px; }

.dockshade { position: absolute; left: 690px; right: 690px; bottom: 0; height: 100px; background: linear-gradient(180deg, transparent, rgba(0,0,0,.03) 40%, rgba(0,0,0,.12));
  -webkit-mask-image: linear-gradient(90deg, transparent, #000 130px, #000 calc(100% - 130px), transparent); mask-image: linear-gradient(90deg, transparent, #000 130px, #000 calc(100% - 130px), transparent); }

/* dock */
.dock {
  position: absolute; left: 790px; top: 1639px; width: 1301px; height: 163px; display: flex; padding: 17px 0 0 16px; gap: 20px;
  border: 2px solid #8b8d8f; border-bottom: 0; border-radius: 12px 12px 0 0; box-shadow: 0 0 0 1px rgba(0,0,0,.5), 0 0 30px rgba(0,0,0,.15);
  background: radial-gradient(circle at 42% 85%, rgba(125,145,125,.5), transparent 14%), radial-gradient(circle at 12% 90%, rgba(190,160,165,.35), transparent 14%), linear-gradient(180deg, #77797c, #949699 55%, #aaabaf);
}
.app { width: 116px; height: 143px; position: relative; flex: none; }
.app svg { width: 116px; height: 116px; filter: drop-shadow(0 2px 2px rgba(0,0,0,.35)); }
.run-on::after { content: ""; position: absolute; left: 54px; top: 130px; width: 8px; height: 8px; border-radius: 50%; background: #fff; }
.divider { width: 2px; height: 120px; background: #c4c6c9; margin: 0 16px 0 20px; flex: none; }
```
